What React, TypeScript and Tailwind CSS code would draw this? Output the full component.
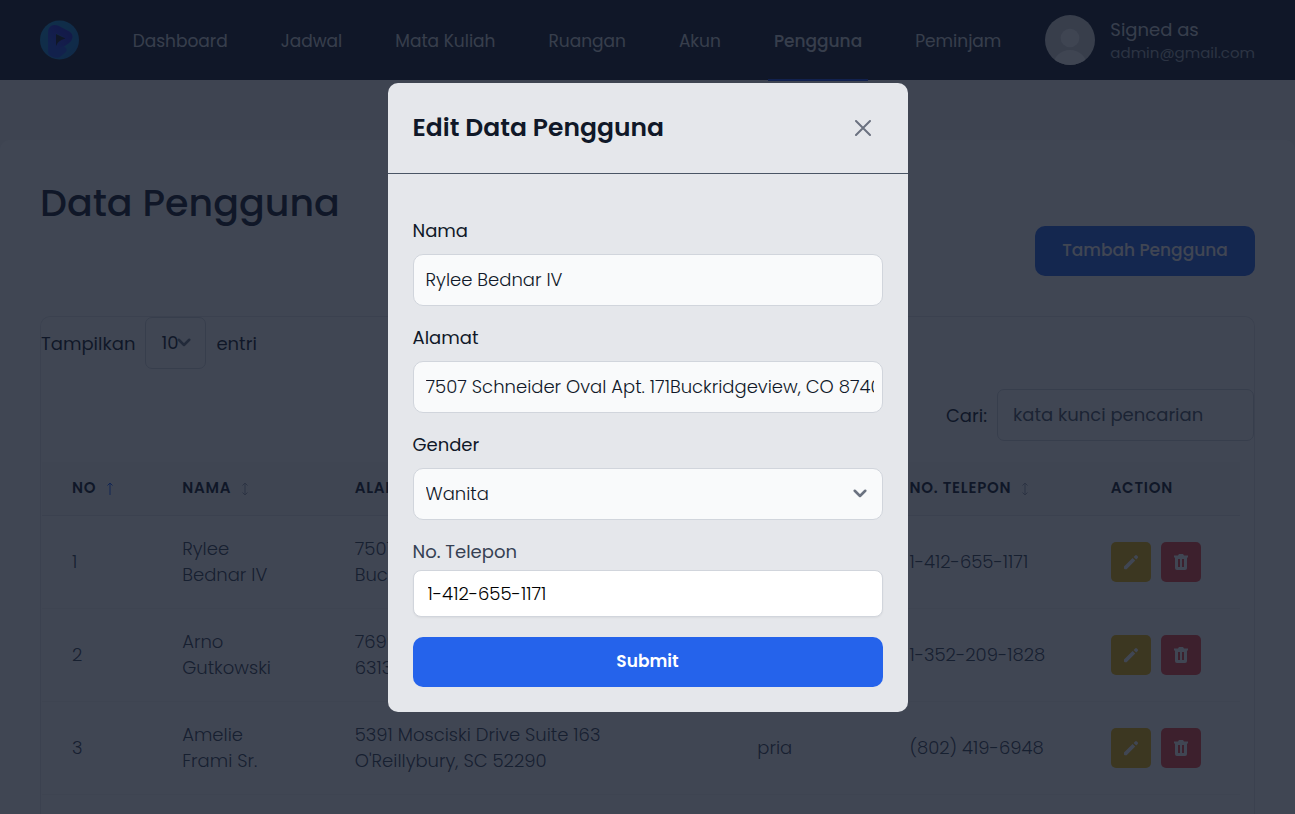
import { useState } from "react";

const NAV = ["Dashboard", "Jadwal", "Mata Kuliah", "Ruangan", "Akun", "Pengguna", "Peminjam"];

type Row = { no: number; name: string[]; address: string[]; gender: string; phone: string };

const ROWS: Row[] = [
  { no: 1, name: ["Rylee", "Bednar IV"], address: ["7507 Schneider Oval Apt. 171", "Buckridgeview, CO 87403"], gender: "wanita", phone: "1-412-655-1171" },
  { no: 2, name: ["Arno", "Gutkowski"], address: ["7699 Kuhn Village", "63131 Lake Town, TX"], gender: "pria", phone: "1-352-209-1828" },
  { no: 3, name: ["Amelie", "Frami Sr."], address: ["5391 Mosciski Drive Suite 163", "O'Reillybury, SC 52290"], gender: "pria", phone: "(802) 419-6948" },
];

function Logo() {
  return (
    <svg viewBox="0 0 40 40" className="size-10" aria-hidden="true">
      <defs>
        <linearGradient id="disc" x1="0" y1="0" x2="1" y2="1">
          <stop offset="0" stopColor="#0f8cd0" />
          <stop offset="1" stopColor="#1470c8" />
        </linearGradient>
        <linearGradient id="ribbon" x1="0" y1="1" x2="1" y2="0">
          <stop offset="0" stopColor="#1a50e0" />
          <stop offset="0.5" stopColor="#2333d8" />
          <stop offset="1" stopColor="#2022c8" />
        </linearGradient>
      </defs>
      <circle cx="19.5" cy="20" r="19.5" fill="url(#disc)" />
      <path d="M12 32V13Q12 7.500 17 9.500L27.500 15Q30 17 26.500 20L15 28" fill="none" stroke="url(#ribbon)" strokeWidth="8" strokeLinecap="round" strokeLinejoin="round" />
      <path d="M12 27V31Q13 35 18 34L23 30" fill="none" stroke="#1c48dc" strokeWidth="7" strokeLinecap="round" strokeLinejoin="round" />
      <path d="M16 14L25.500 18.500Q17.500 20.500 16 26Z" fill="#111827" />
    </svg>
  );
}

function Avatar() {
  return (
    <svg viewBox="0 0 50 50" className="size-[50px] shrink-0" aria-hidden="true">
      <clipPath id="round"><circle cx="25" cy="25" r="25" /></clipPath>
      <g clipPath="url(#round)">
        <rect width="50" height="50" fill="#d4d4d8" />
        <circle cx="25" cy="23" r="9.3" fill="#fafafa" />
        <ellipse cx="25" cy="51" rx="17" ry="16" fill="#fafafa" />
      </g>
    </svg>
  );
}

function Chevron({ className }: { className: string }) {
  return (
    <svg viewBox="0 0 12 8" className={className} fill="none" stroke="#6b7280" strokeWidth="2.2" strokeLinecap="round" strokeLinejoin="round" aria-hidden="true">
      <path d="M1.5 1.5 6 6 10.500 1.5" />
    </svg>
  );
}

function Sort({ active = false }: { active?: boolean }) {
  return (
    <svg viewBox="0 0 8 14" className={active ? "mt-0.5 h-[14px] w-2 text-blue-600" : "mt-0.5 h-[14px] w-2 text-gray-400"} fill="none" stroke="currentColor" strokeWidth="1" aria-hidden="true">
      <path d="M4 1V13M1.5 3.5 4 1 6.5 3.5" />
      {!active && <path d="M1.5 10.5 4 13 6.5 10.5" />}
    </svg>
  );
}

const TH = "h-[53px] pl-[30px] text-left text-[15px] font-semibold tracking-wider text-gray-900";
const TD = "py-5 pl-[30px] text-[18px] leading-[26px] font-light text-gray-700";
const LABEL = "block text-[18px] leading-[26px] text-gray-900";
const FIELD = "h-[52px] w-full rounded-[10px] border border-gray-300 bg-gray-50 pr-2 pb-0.5 pl-3 text-[18px] font-light text-gray-900";

export default function App() {
  const [name, setName] = useState("Rylee Bednar IV");
  const [address, setAddress] = useState("7507 Schneider Oval Apt. 171Buckridgeview, CO 87403");
  const [phone, setPhone] = useState("1-412-655-1171");

  return (
    <div className="flex h-screen flex-col overflow-hidden bg-gray-100 font-['Poppins','Inter',sans-serif] text-gray-900">
      <header className="flex h-20 shrink-0 items-center bg-gray-900 px-10">
        <a href="#" aria-label="Beranda"><Logo /></a>
        <nav className="mr-11 ml-auto flex h-full items-center gap-[53px] pt-1 text-[17px] text-gray-300">
          {NAV.map((item) => (
            <a key={item} href="#" className={item === "Pengguna" ? "relative font-medium" : "relative"}>
              {item}
              {item === "Pengguna" && <span className="absolute -inset-x-1.5 top-[50px] h-0.5 bg-blue-700" />}
            </a>
          ))}
        </nav>
        <div className="flex items-center gap-[15px]">
          <Avatar />
          <div className="pt-0.5">
            <p className="text-[18px] leading-6 text-gray-300">Signed as</p>
            <p className="text-[15px] leading-[22px] text-gray-400">admin@gmail.com</p>
          </div>
        </div>
      </header>

      <main className="mt-[60px] flex grow flex-col rounded-t-[10px] bg-white px-10 pt-9">
        <h1 className="text-[38px] leading-[54px] font-medium">Data Pengguna</h1>
        <div className="flex justify-end">
          <button type="button" className="-mt-1 h-[50px] w-[220px] rounded-[10px] bg-[#2563eb] text-[17px] font-medium text-white">Tambah Pengguna</button>
        </div>

        <section className="mt-10 grow rounded-t-[10px] border border-b-0 border-gray-200">
          <div className="flex items-center gap-2.5 text-[18px]">
            <label htmlFor="length">Tampilkan</label>
            <div className="relative">
              <select id="length" className="block h-[52px] w-[61px] appearance-none rounded-[7px] border border-gray-300 pb-0.5 pl-[15px]">
                <option>10</option>
              </select>
              <Chevron className="pointer-events-none absolute top-[21px] right-[15px] w-3.5" />
            </div>
            <span>entri</span>
          </div>
          <div className="mt-5 flex items-center justify-end gap-2.5 text-[18px]">
            <label htmlFor="search">Cari:</label>
            <input id="search" type="search" placeholder="kata kunci pencarian" className="h-[52px] w-[257px] rounded-[7px] border border-gray-300 px-[15px] pb-0.5 placeholder:text-gray-600" />
          </div>
          <div className="mt-[21px] pr-[14px] pl-px">
            <table className="w-full table-fixed border-collapse">
              <colgroup>
                <col className="w-[9.2%]" />
                <col className="w-[14.4%]" />
                <col className="w-[33.6%]" />
                <col className="w-[12.7%]" />
                <col className="w-[16.8%]" />
                <col className="w-[13.3%]" />
              </colgroup>
              <thead>
                <tr className="border-b border-gray-200 bg-gray-50">
                  {["NO", "NAMA", "ALAMAT", "GENDER", "NO. TELEPON"].map((h) => (
                    <th key={h} scope="col" className={TH}>
                      <span className="flex items-center gap-2.5">{h}<Sort active={h === "NO"} /></span>
                    </th>
                  ))}
                  <th scope="col" className={TH}>ACTION</th>
                </tr>
              </thead>
              <tbody>
                {ROWS.map((row) => (
                  <tr key={row.no} className="border-b border-gray-100">
                    <td className={TD}>{row.no}</td>
                    <td className={TD}>{row.name.map((t) => <span key={t} className="block">{t}</span>)}</td>
                    <td className={TD}>{row.address.map((t) => <span key={t} className="block">{t}</span>)}</td>
                    <td className={TD}>{row.gender}</td>
                    <td className={TD}>{row.phone}</td>
                    <td className={TD}>
                      <div className="flex gap-2.5">
                        <button type="button" aria-label="Edit" className="grid size-10 place-items-center rounded-[5px] bg-[#eab308] text-white">
                          <svg viewBox="0 0 16 16" className="size-4" fill="currentColor"><path d="M1 12.6 9.600 4 12.200 6.600 3.600 15.200H2Q1 15.200 1 14.200ZM10.600 3 12.100 1.500Q13 .7 13.900 1.500L14.700 2.300Q15.500 3.200 14.700 4.100L13.200 5.600Z" /></svg>
                        </button>
                        <button type="button" aria-label="Hapus" className="grid size-10 place-items-center rounded-[5px] bg-[#ef4444] text-white">
                          <svg viewBox="0 0 16 16" className="size-4" fill="currentColor" fillRule="evenodd"><path d="M1 1.5H5L6 0H10L11 1.5H15V3.5H14V14Q14 16 12 16H4Q2 16 2 14V3.5H1ZM5 5V13H7V5ZM9 5V13H11V5Z" /></svg>
                        </button>
                      </div>
                    </td>
                  </tr>
                ))}
              </tbody>
            </table>
          </div>
        </section>
      </main>

      <div className="fixed inset-0 flex items-start justify-center bg-gray-900/80 pt-[83px]">
        <div role="dialog" aria-modal="true" aria-labelledby="title" className="w-full max-w-[520px] rounded-[10px] bg-gray-200">
          <div className="flex h-[91px] items-center justify-between border-b border-gray-600 px-[25px]">
            <h2 id="title" className="text-[25px] font-semibold">Edit Data Pengguna</h2>
            <button type="button" aria-label="Tutup" className="grid size-10 place-items-center">
              <svg viewBox="0 0 16 16" className="size-4" fill="none" stroke="#6b7280" strokeWidth="2" strokeLinecap="round"><path d="M1 1 15 15M15 1 1 15" /></svg>
            </button>
          </div>
          <form className="px-[25px] pt-11 pb-[25px]" onSubmit={(e) => e.preventDefault()}>
            <label htmlFor="name" className={LABEL}>Nama</label>
            <input id="name" value={name} onChange={(e) => setName(e.target.value)} className={`${FIELD} mt-2.5 mb-[19px]`} />
            <label htmlFor="address" className={LABEL}>Alamat</label>
            <input id="address" value={address} onChange={(e) => setAddress(e.target.value)} className={`${FIELD} mt-2.5 mb-[19px]`} />
            <label htmlFor="gender" className={LABEL}>Gender</label>
            <div className="relative mt-2.5 mb-[19px]">
              <select id="gender" defaultValue="Wanita" className={`${FIELD} block appearance-none`}>
                <option>Wanita</option>
                <option>Pria</option>
              </select>
              <Chevron className="pointer-events-none absolute top-[21px] right-4 w-3.5" />
            </div>
            <label htmlFor="phone" className="block text-[18px] leading-[26px] text-gray-700">No. Telepon</label>
            <input id="phone" value={phone} onChange={(e) => setPhone(e.target.value)} className="mt-[5px] h-[47px] w-full rounded-lg border border-gray-300 bg-white px-3.5 text-[18px] font-light text-black shadow-xs" />
            <button type="submit" className="mt-5 h-[50px] w-full rounded-[10px] bg-[#2563eb] text-[17px] font-semibold text-white">Submit</button>
          </form>
        </div>
      </div>
    </div>
  );
}
